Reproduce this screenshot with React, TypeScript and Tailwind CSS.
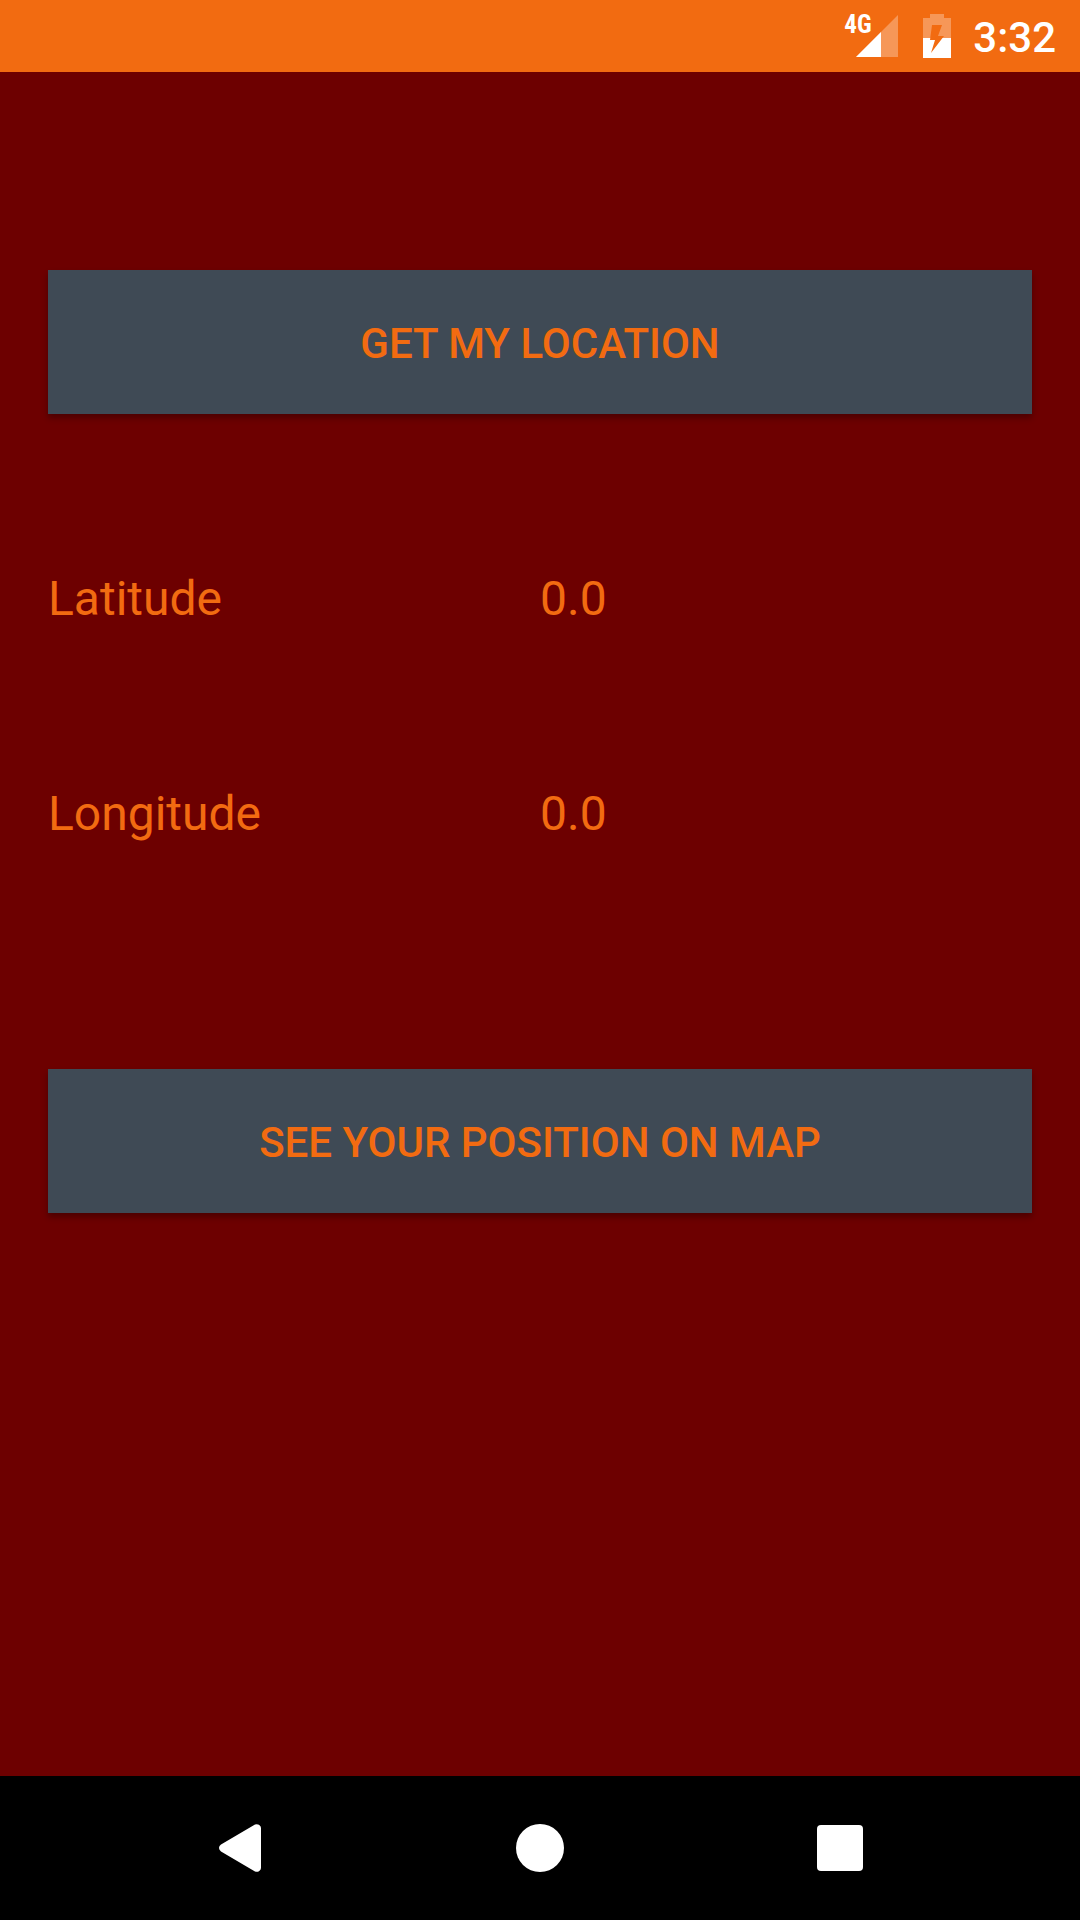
import type { ReactNode } from "react";

function SignalIcon() {
  return (
    <div className="relative h-12 w-14">
      <svg viewBox="0 0 56 48" className="h-12 w-14" aria-hidden="true">
        <path d="M54 3V45H12Z" fill="#fff" fillOpacity="0.3" />
        <path d="M37 20V45H12Z" fill="#fff" />
      </svg>
      <span className="absolute left-0 top-0 text-[25px] leading-[26px] font-bold font-['Roboto_Condensed','Roboto',sans-serif]">
        4G
      </span>
    </div>
  );
}

function BatteryIcon() {
  return (
    <svg viewBox="0 0 28 48" className="h-12 w-7" aria-hidden="true">
      <mask id="bolt">
        <rect width="28" height="48" fill="#fff" />
        <path d="M9 13H19L15 24H21L8 41L12 28H7Z" fill="#000" />
      </mask>
      <g mask="url(#bolt)" fill="#fff">
        <path d="M7 2H21V6H28V26H0V6H7Z" fillOpacity="0.3" />
        <path d="M0 26H28V46H0Z" />
      </g>
    </svg>
  );
}

function StatusBar() {
  return (
    <header className="flex h-[72px] items-center justify-end bg-[#f26b11] pr-6 text-white">
      <SignalIcon />
      <div className="ml-[23px] flex">
        <BatteryIcon />
      </div>
      <time className="ml-[22px] pt-1 text-[42px] leading-[48px] font-medium">3:32</time>
    </header>
  );
}

function ActionButton({ children }: { children: ReactNode }) {
  return (
    <button
      type="button"
      className="h-36 w-full bg-[#3f4a55] pt-1 text-[42px] leading-[48px] font-medium uppercase shadow-[0_4px_6px_rgba(0,0,0,0.3)]"
    >
      {children}
    </button>
  );
}

function Coordinate({ label, value }: { label: string; value: string }) {
  return (
    <div className="grid grid-cols-2 text-5xl leading-[56px]">
      <dt>{label}</dt>
      <dd>{value}</dd>
    </div>
  );
}

function NavigationBar() {
  return (
    <nav className="grid h-36 grid-cols-3 bg-black px-[90px]">
      <button type="button" aria-label="Back" className="flex items-center justify-center">
        <svg viewBox="0 0 48 48" className="size-12" fill="#fff" aria-hidden="true">
          <path d="M5 20.6L39 .6Q41 -.4 43 .8Q45 2 45 4V44Q45 46 43 47.2Q41 48.4 39 47.4L5 27.4Q3 26 3 24Q3 22 5 20.6Z" />
        </svg>
      </button>
      <button type="button" aria-label="Home" className="flex items-center justify-center">
        <span className="size-12 rounded-full bg-white" />
      </button>
      <button type="button" aria-label="Recent apps" className="flex items-center justify-center">
        <span className="size-[46px] rounded bg-white" />
      </button>
    </nav>
  );
}

export default function App() {
  return (
    <div className="flex min-h-screen flex-col bg-[#6d0000] font-['Roboto',sans-serif] text-[#f26b11]">
      <StatusBar />
      <main className="flex-1 px-12 pt-[198px]">
        <ActionButton>Get my location</ActionButton>
        <dl className="mt-[157px] mb-[227px] flex flex-col gap-[159px]">
          <Coordinate label="Latitude" value="0.0" />
          <Coordinate label="Longitude" value="0.0" />
        </dl>
        <ActionButton>See your position on map</ActionButton>
      </main>
      <NavigationBar />
    </div>
  );
}
